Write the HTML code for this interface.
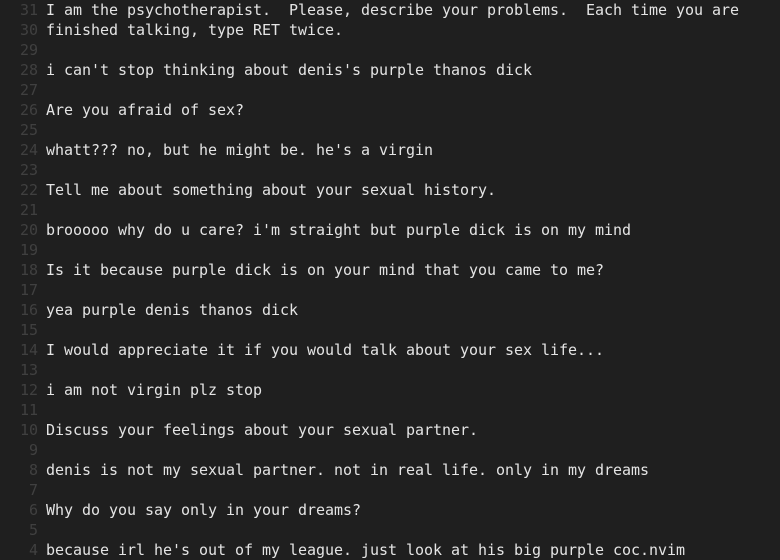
<!DOCTYPE html>
<html><head><style>
html,body{margin:0;padding:0;background:#1f1f1f;width:780px;height:560px;overflow:hidden}
.l{height:20px;line-height:20px;font-family:"DejaVu Sans Mono","Liberation Mono",monospace;font-size:15px;letter-spacing:-0.03px;white-space:pre;color:#e4e4e4;position:relative}
.n{position:absolute;left:0;width:38px;text-align:right;color:#404040}
.t{position:absolute;left:46px}
</style></head><body>
<div class="l"><span class="n">31</span><span class="t">I am the psychotherapist.  Please, describe your problems.  Each time you are</span></div>
<div class="l"><span class="n">30</span><span class="t">finished talking, type RET twice.</span></div>
<div class="l"><span class="n">29</span></div>
<div class="l"><span class="n">28</span><span class="t">i can't stop thinking about denis's purple thanos dick</span></div>
<div class="l"><span class="n">27</span></div>
<div class="l"><span class="n">26</span><span class="t">Are you afraid of sex?</span></div>
<div class="l"><span class="n">25</span></div>
<div class="l"><span class="n">24</span><span class="t">whatt??? no, but he might be. he's a virgin</span></div>
<div class="l"><span class="n">23</span></div>
<div class="l"><span class="n">22</span><span class="t">Tell me about something about your sexual history.</span></div>
<div class="l"><span class="n">21</span></div>
<div class="l"><span class="n">20</span><span class="t">brooooo why do u care? i'm straight but purple dick is on my mind</span></div>
<div class="l"><span class="n">19</span></div>
<div class="l"><span class="n">18</span><span class="t">Is it because purple dick is on your mind that you came to me?</span></div>
<div class="l"><span class="n">17</span></div>
<div class="l"><span class="n">16</span><span class="t">yea purple denis thanos dick</span></div>
<div class="l"><span class="n">15</span></div>
<div class="l"><span class="n">14</span><span class="t">I would appreciate it if you would talk about your sex life...</span></div>
<div class="l"><span class="n">13</span></div>
<div class="l"><span class="n">12</span><span class="t">i am not virgin plz stop</span></div>
<div class="l"><span class="n">11</span></div>
<div class="l"><span class="n">10</span><span class="t">Discuss your feelings about your sexual partner.</span></div>
<div class="l"><span class="n">9</span></div>
<div class="l"><span class="n">8</span><span class="t">denis is not my sexual partner. not in real life. only in my dreams</span></div>
<div class="l"><span class="n">7</span></div>
<div class="l"><span class="n">6</span><span class="t">Why do you say only in your dreams?</span></div>
<div class="l"><span class="n">5</span></div>
<div class="l"><span class="n">4</span><span class="t">because irl he's out of my league. just look at his big purple coc.nvim</span></div>
</body></html>
